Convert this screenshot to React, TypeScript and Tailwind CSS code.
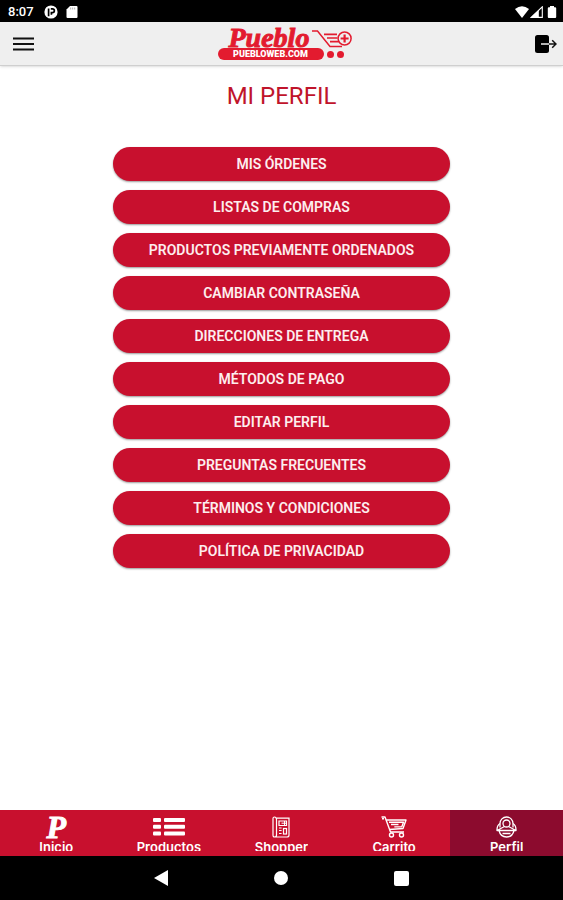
import React from 'react';

const menuItems = [
    'Mis órdenes',
    'Listas de compras',
    'Productos previamente ordenados',
    'Cambiar contraseña',
    'Direcciones de entrega',
    'Métodos de pago',
    'Editar perfil',
    'Preguntas frecuentes',
    'Términos y condiciones',
    'Política de privacidad',
];

const StatusBar: React.FC = () => (
    <div className="flex h-[22px] items-center justify-between bg-black pt-0.5 pr-1.5 pl-2 text-white">
        <div className="flex items-center">
            <span className="w-9 text-[13px] leading-4 font-medium">8:07</span>
            <svg className="h-3.5 w-3.5" viewBox="0 0 14 14" aria-hidden="true">
                <circle cx="7" cy="7" r="6.6" fill="currentColor" />
                <path d="M4.6 3.6v7.6M6.8 3.8h1.6a1.9 1.9 0 0 1 0 3.9H7.4v2" fill="none" stroke="#000" strokeWidth="1.7" />
            </svg>
            <svg className="ml-2 h-3 w-3" viewBox="0 0 12 12" aria-hidden="true">
                <path d="M4 0h6.5q1 0 1 1v10q0 1-1 1h-9q-1 0-1-1V3.6z" fill="currentColor" />
                <path d="M4.7 1.5v2M6.7 1.5v2M8.7 1.5v2" stroke="#999" strokeWidth="0.8" />
            </svg>
        </div>
        <div className="flex items-center">
            <svg className="h-3 w-3.5" viewBox="0 0 14 12" aria-hidden="true">
                <path d="M0 3Q7-2.5 14 3L7 12z" fill="currentColor" />
            </svg>
            <svg className="ml-px h-3 w-[13px]" viewBox="0 0 13 12" aria-hidden="true">
                <path d="M12.3.8v10.6H1.2z" fill="none" stroke="currentColor" strokeWidth="1.1" />
                <path d="M8.8 4v7.5H.8z" fill="currentColor" />
            </svg>
            <svg className="ml-1 h-3 w-[10px]" viewBox="0 0 10 12" aria-hidden="true">
                <path d="M3 0h4v1.2h1.2q1 0 1 1V11q0 1-1 1H1.8q-1 0-1-1V2.2q0-1 1-1H3z" fill="currentColor" />
            </svg>
        </div>
    </div>
);

const Logo: React.FC = () => (
    <a href="#inicio" aria-label="Pueblo" className="block text-[#e31b2f]">
        <div className="flex h-[21px] items-center pl-[11px]">
            <span className="w-[83px] font-['Liberation_Serif',serif] text-[28px] leading-5 font-bold italic [-webkit-text-stroke:1px_currentColor]">Pueblo</span>
            <svg className="h-5 w-10" viewBox="0 0 40 20" fill="none" stroke="currentColor" aria-hidden="true">
                <path d="M0 3h5.5l12.5 15.5H30" strokeWidth="1.5" />
                <path d="M12 6.4h13M15 10h10.5M18 13.6h9.5" strokeWidth="1.6" />
                <circle cx="32.6" cy="10.5" r="6.5" strokeWidth="1.5" />
                <path d="M32.6 6.5v8M28.6 10.5h8" strokeWidth="2.2" />
            </svg>
        </div>
        <div className="flex h-3 items-center gap-[3px]">
            <span className="w-[106px] rounded-full bg-[#e31b2f] text-center text-[9px] leading-3 font-black text-white">PUEBLOWEB.COM</span>
            <span className="h-[7px] w-[7px] rounded-full bg-[#e31b2f]" />
            <span className="h-[7px] w-[7px] rounded-full bg-[#e31b2f]" />
        </div>
    </a>
);

const Header: React.FC = () => (
    <header className="grid h-11 grid-cols-[1fr_auto_1fr] items-center border-b border-[#cfcfcf] bg-[#efefef] pr-1.5 pl-3 shadow-sm">
        <button type="button" aria-label="Menú" className="w-[22px]">
            <svg className="h-[14px] w-[22px]" viewBox="0 0 22 14" stroke="#111" strokeWidth="1.8" aria-hidden="true">
                <path d="M1 1.5h21M1 7h21M1 12.5h21" />
            </svg>
        </button>
        <Logo />
        <button type="button" aria-label="Salir" className="w-[22px] justify-self-end">
            <svg className="h-[18px] w-[22px]" viewBox="0 0 22 18" fill="none" aria-hidden="true">
                <rect x="0" y="0" width="14" height="18" rx="2.5" fill="#000" />
                <path d="M6 9h8" stroke="#efefef" strokeWidth="1.5" />
                <path d="M14 9h7M17.2 5.2L21 9l-3.8 3.8" stroke="#111" strokeWidth="1.5" />
            </svg>
        </button>
    </header>
);

const ListIcon: React.FC = () => (
    <svg className="h-[18px] w-8" viewBox="0 0 32 18" fill="currentColor" aria-hidden="true">
        <rect x="0" y="0" width="8" height="4" rx="1" />
        <rect x="0" y="6.7" width="8" height="4" rx="1" />
        <rect x="0" y="13.4" width="8" height="4" rx="1" />
        <rect x="11" y="0" width="21" height="4" rx="1" />
        <rect x="11" y="6.7" width="21" height="4" rx="1" />
        <rect x="11" y="13.4" width="21" height="4" rx="1" />
    </svg>
);

const ShopperIcon: React.FC = () => (
    <svg className="h-[22px] w-[18px]" viewBox="0 0 18 22" fill="none" stroke="currentColor" aria-hidden="true">
        <path d="M4.5 3.5V19q0 2-1.8 2T1 19V2.5Q1 1 2.6 1t1.9 2.5M4.5 2.2H17V19q0 2-2 2H2.7" strokeWidth="1.2" />
        <path d="M7 5h7.5v4.5H7zM7 12h2.6M7 14.5h2.6M7 17.5h2.6" strokeWidth="1.2" />
        <path d="M12.5 5v4.5M9.5 7.2h5" strokeWidth="1" />
        <rect x="11.5" y="12.5" width="3" height="5.5" strokeWidth="1.2" />
    </svg>
);

const CartIcon: React.FC = () => (
    <svg className="h-[22px] w-[26px]" viewBox="0 0 26 22" fill="none" stroke="currentColor" strokeWidth="1.4" strokeLinejoin="round" aria-hidden="true">
        <path d="M.5 1H4l5.5 15H23M1 2.8h2" />
        <path d="M5.2 4H25l-3 8.5L8.3 13.5" />
        <path d="M8 6.2h14.5l-1.7 4.5-7.5.2M10 8.5h7.5" />
        <circle cx="10.5" cy="19" r="2" />
        <circle cx="20.5" cy="19" r="2" />
    </svg>
);

const ProfileIcon: React.FC = () => (
    <svg className="h-[22px] w-[21px]" viewBox="0 0 21 22" fill="none" stroke="currentColor" strokeWidth="1.3" strokeLinejoin="round" aria-hidden="true">
        <path d="M4 11.5V7.5a6.5 6.5 0 0 1 13 0v4" />
        <circle cx="10.5" cy="7.5" r="3.5" />
        <path d="M8.5 10.5L1 14.5M12.5 10.5l7.5 4M4 7.5Q.8 9.5 1 14.5h19Q20.2 9.5 17 7.5" />
        <path d="M3 14.5Q4.5 21 10.5 21T18 14.5M6.5 17.5h8" />
    </svg>
);

const BrandIcon: React.FC = () => (
    <span className="font-['Liberation_Serif',serif] text-[32px] leading-[22px] font-bold italic [-webkit-text-stroke:1px_currentColor]" aria-hidden="true">
        P
    </span>
);

const tabs = [
    { title: 'Inicio', href: '#inicio', icon: <BrandIcon /> },
    { title: 'Productos', href: '#productos', icon: <ListIcon /> },
    { title: 'Shopper', href: '#shopper', icon: <ShopperIcon /> },
    { title: 'Carrito', href: '#carrito', icon: <CartIcon /> },
    { title: 'Perfil', href: '#perfil', icon: <ProfileIcon />, active: true },
];

const TabBar: React.FC = () => (
    <nav className="grid grid-cols-5 bg-[#c8102e] text-white">
        {tabs.map((tab) => (
            <a
                key={tab.href}
                href={tab.href}
                aria-current={tab.active ? 'page' : undefined}
                className={`flex h-[46px] flex-col items-center pt-[5px] ${tab.active ? 'bg-[#8c0b2e]' : ''}`}
            >
                <span className="flex h-6 items-center justify-center">{tab.icon}</span>
                {/* labels are cut off just above their baseline */}
                <span className="h-3 overflow-hidden font-[Inter] text-[13px] leading-4 font-semibold">{tab.title}</span>
            </a>
        ))}
    </nav>
);

const SystemBar: React.FC = () => (
    <div className="flex h-11 items-center justify-center gap-[106px] bg-black text-white">
        <button type="button" aria-label="Atrás">
            <svg className="h-4 w-[14px]" viewBox="0 0 14 16" fill="currentColor" aria-hidden="true">
                <path d="M0 8L14 0v16z" />
            </svg>
        </button>
        <button type="button" aria-label="Pantalla de inicio" className="h-[14px] w-[14px] rounded-full bg-white" />
        <button type="button" aria-label="Recientes" className="h-[15px] w-[15px] rounded-xs bg-white" />
    </div>
);

const App: React.FC = () => (
    <div className="flex min-h-screen flex-col bg-white font-[Roboto,sans-serif]">
        <StatusBar />
        <Header />
        <main className="flex grow flex-col items-center">
            <h1 className="mt-3.5 text-2xl leading-8 text-[#c0142b]">MI PERFIL</h1>
            <div className="mt-[35px] flex w-3/5 flex-col gap-[9px]">
                {menuItems.map((item) => (
                    <button
                        key={item}
                        type="button"
                        className="h-[34px] rounded-full bg-[#c8102e] text-sm leading-4 font-semibold text-[#fdeeee] uppercase shadow-[0_1px_2px_rgba(0,0,0,0.4)]"
                    >
                        {item}
                    </button>
                ))}
            </div>
        </main>
        <TabBar />
        <SystemBar />
    </div>
);

export default App;
